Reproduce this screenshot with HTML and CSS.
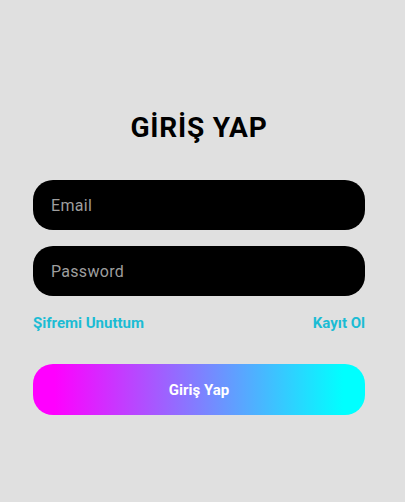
FILE: index.html
```html
<!DOCTYPE html>
<html lang="tr">
<head>
<meta charset="utf-8">
<link rel="stylesheet" href="styles.css">
</head>
<body>
<main class="page">
  <h1 class="title">GİRİŞ YAP</h1>
  <div class="field"><span class="placeholder">Email</span></div>
  <div class="field field--second"><span class="placeholder">Password</span></div>
  <div class="links">
    <a class="link">Şifremi Unuttum</a>
    <a class="link">Kayıt Ol</a>
  </div>
  <button class="btn">Giriş Yap</button>
</main>
</body>
</html>
```
FILE: styles.css
```css
html, body {
  margin: 0;
  padding: 0;
  background: #e0e0e0;
  font-family: Roboto, "Noto Sans", sans-serif;
}
.page {
  width: 332px;
  margin-left: 33px;
  padding-top: 112px;
  display: flex;
  flex-direction: column;
}
.title {
  margin: 0;
  font-size: 28px;
  line-height: 32px;
  font-weight: 700;
  letter-spacing: 0.8px;
  text-align: center;
  color: #000;
}
.field {
  margin-top: 36px;
  height: 50px;
  border-radius: 20px;
  background: #000;
  display: flex;
  align-items: center;
  padding-left: 18px;
}
.field--second {
  margin-top: 16px;
}
.placeholder {
  color: #9e9e9e;
  font-size: 16px;
  letter-spacing: 0.3px;
}
.links {
  margin-top: 18px;
  display: flex;
  justify-content: space-between;
  line-height: 18px;
}
.link {
  color: #1cbcd4;
  font-size: 15px;
  font-weight: 700;
}
.btn {
  margin-top: 32px;
  height: 51px;
  border: none;
  border-radius: 20px;
  background: linear-gradient(90deg, #ff00ff 0%, #ff00ff 6.5%, #00ffff 93.5%, #00ffff 100%);
  color: #fff;
  font-family: Roboto, "Noto Sans", sans-serif;
  font-size: 15px;
  font-weight: 700;
  padding: 0;
}
```
